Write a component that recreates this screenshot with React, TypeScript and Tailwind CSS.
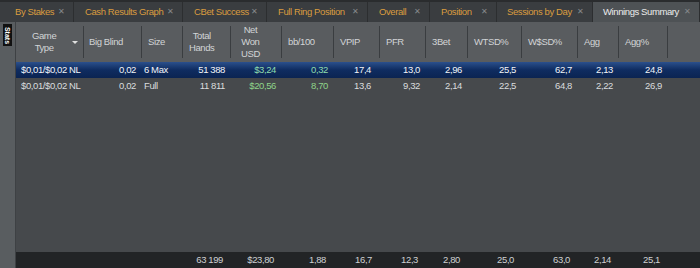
import React from "react";

const tabs = [
  { name: "By Stakes", w: 74, pl: 15 },
  { name: "Cash Results Graph", w: 109, pl: 11 },
  { name: "CBet Success", w: 84, pl: 11 },
  { name: "Full Ring Position", w: 101, pl: 11 },
  { name: "Overall", w: 62, pl: 11 },
  { name: "Position", w: 67, pl: 11 },
  { name: "Sessions by Day", w: 96, pl: 10 },
  { name: "Winnings Summary", w: 107, pl: 10, active: true },
];

const cols = [68, 58, 41, 48, 51, 52, 46, 46, 42, 54, 56, 41, 49];

type Row = {
  game: string;
  bb: string;
  size: string;
  hands: string;
  net: string;
  bb100: string;
  vpip: string;
  pfr: string;
  threeBet: string;
  wtsd: string;
  wsd: string;
  agg: string;
  aggPct: string;
};

const rows: Row[] = [
  {
    game: "$0,01/$0,02 NL",
    bb: "0,02",
    size: "6 Max",
    hands: "51 388",
    net: "$3,24",
    bb100: "0,32",
    vpip: "17,4",
    pfr: "13,0",
    threeBet: "2,96",
    wtsd: "25,5",
    wsd: "62,7",
    agg: "2,13",
    aggPct: "24,8",
  },
  {
    game: "$0,01/$0,02 NL",
    bb: "0,02",
    size: "Full",
    hands: "11 811",
    net: "$20,56",
    bb100: "8,70",
    vpip: "13,6",
    pfr: "9,32",
    threeBet: "2,14",
    wtsd: "22,5",
    wsd: "64,8",
    agg: "2,22",
    aggPct: "26,9",
  },
];

const totals = ["", "", "", "63 199", "$23,80", "1,88", "16,7", "12,3", "2,80", "25,0", "63,0", "2,14", "25,1"];

const HeadCell = ({ w, children, pl }: { w: number; children: React.ReactNode; pl: number }) => (
  <div className="flex h-full shrink-0 items-center" style={{ width: w }}>
    <div className="flex flex-1 items-center" style={{ paddingLeft: pl }}>
      {children}
    </div>
    <div className="my-[4px] w-px self-stretch bg-[#3a3d40]" />
  </div>
);

const Cell = ({ w, children, left, color }: { w: number; children: React.ReactNode; left?: boolean; color?: string }) => (
  <div
    className={`shrink-0 whitespace-nowrap ${left ? "text-left pl-[5px]" : "text-right pr-[6px]"}`}
    style={{ width: w, color }}
  >
    {children}
  </div>
);

export default function App() {
  return (
    <div
      className="flex h-[268px] w-[700px] flex-col overflow-hidden bg-[#46494c] text-[9.5px] tracking-[-0.4px]"
      style={{ fontFamily: '"Liberation Sans", Arial, sans-serif' }}
    >
      {/* tab strip */}
      <div className="flex h-[22px] shrink-0 border-t-2 border-[#2a2c2e] bg-[#3a3d40]">
        {tabs.map((t) => (
          <div
            key={t.name}
            className={`flex shrink-0 items-center border-r border-[#2c2e30] ${
              t.active ? "bg-[#4e5255] text-[#ececec]" : "text-[#d99c3f]"
            }`}
            style={{ width: t.w, paddingLeft: t.pl }}
          >
            <span className="whitespace-nowrap">{t.name}</span>
            <span className="ml-auto mr-[8px] text-[8px] text-[#86898c]">✕</span>
          </div>
        ))}
      </div>

      <div className="flex min-h-0 flex-1">
        {/* side strip */}
        <div className="flex w-[16px] shrink-0 flex-col items-center border-r border-[#3e4144] bg-[#595d60] pt-[2px]">
          <div className="flex h-[22px] w-[9px] items-center justify-center bg-[#111]">
            <span className="rotate-90 whitespace-nowrap text-[7px] font-bold leading-none tracking-normal text-white">
              Stats
            </span>
          </div>
        </div>

        <div className="flex min-w-0 flex-1 flex-col">
          {/* header */}
          <div className="flex h-[40px] shrink-0 bg-[#595c5f] leading-[12px] text-[#d2d4d6]">
            <HeadCell w={cols[0]} pl={16}>
              <span className="text-center">
                Game
                <br />
                Type
              </span>
              <span className="ml-auto mr-[5px] h-0 w-0 border-x-[3px] border-t-[3px] border-x-transparent border-t-[#e0e0e0]" />
            </HeadCell>
            <HeadCell w={cols[1]} pl={5}>Big Blind</HeadCell>
            <HeadCell w={cols[2]} pl={6}>Size</HeadCell>
            <HeadCell w={cols[3]} pl={6}>
              <span className="text-center">
                Total
                <br />
                Hands
              </span>
            </HeadCell>
            <HeadCell w={cols[4]} pl={10}>
              <span className="text-center">
                Net
                <br />
                Won
                <br />
                USD
              </span>
            </HeadCell>
            <HeadCell w={cols[5]} pl={6}>bb/100</HeadCell>
            <HeadCell w={cols[6]} pl={6}>VPIP</HeadCell>
            <HeadCell w={cols[7]} pl={6}>PFR</HeadCell>
            <HeadCell w={cols[8]} pl={6}>3Bet</HeadCell>
            <HeadCell w={cols[9]} pl={6}>WTSD%</HeadCell>
            <HeadCell w={cols[10]} pl={6}>W$SD%</HeadCell>
            <HeadCell w={cols[11]} pl={6}>Agg</HeadCell>
            <HeadCell w={cols[12]} pl={6}>Agg%</HeadCell>
            <div className="flex-1" />
          </div>

          {/* rows */}
          {rows.map((r, i) => {
            const sel = i === 0;
            const green = sel ? "#8fdcae" : "#8fd48a";
            return (
              <div
                key={i}
                className={`flex h-[16px] shrink-0 items-center ${
                  sel
                    ? "bg-gradient-to-b from-[#2b508c] via-[#0f2c60] to-[#0b2452] text-[#f2f4f8]"
                    : "text-[#dadcde]"
                }`}
              >
                <Cell w={cols[0]} left>{r.game}</Cell>
                <Cell w={cols[1]}>{r.bb}</Cell>
                <Cell w={cols[2]} left>
                  <span className="-ml-[3px]">{r.size}</span>
                </Cell>
                <Cell w={cols[3]}>{r.hands}</Cell>
                <Cell w={cols[4]} color={green}>{r.net}</Cell>
                <Cell w={cols[5]} color={green}>{r.bb100}</Cell>
                <Cell w={cols[6]}>
                  <span className="mr-[3px]">{r.vpip}</span>
                </Cell>
                <Cell w={cols[7]}>{r.pfr}</Cell>
                <Cell w={cols[8]}>{r.threeBet}</Cell>
                <Cell w={cols[9]}>{r.wtsd}</Cell>
                <Cell w={cols[10]}>{r.wsd}</Cell>
                <Cell w={cols[11]}>{r.agg}</Cell>
                <Cell w={cols[12]}>{r.aggPct}</Cell>
                <div className="flex-1" />
              </div>
            );
          })}

          <div className="flex-1" />

          {/* totals */}
          <div className="flex h-[16px] shrink-0 items-center bg-[#222426] text-[#cfd1d3]">
            {totals.map((t, i) => (
              <div key={i} className="shrink-0 pr-[8px] text-right" style={{ width: cols[i] }}>
                {t}
              </div>
            ))}
            <div className="flex-1" />
          </div>
        </div>
      </div>
    </div>
  );
}
